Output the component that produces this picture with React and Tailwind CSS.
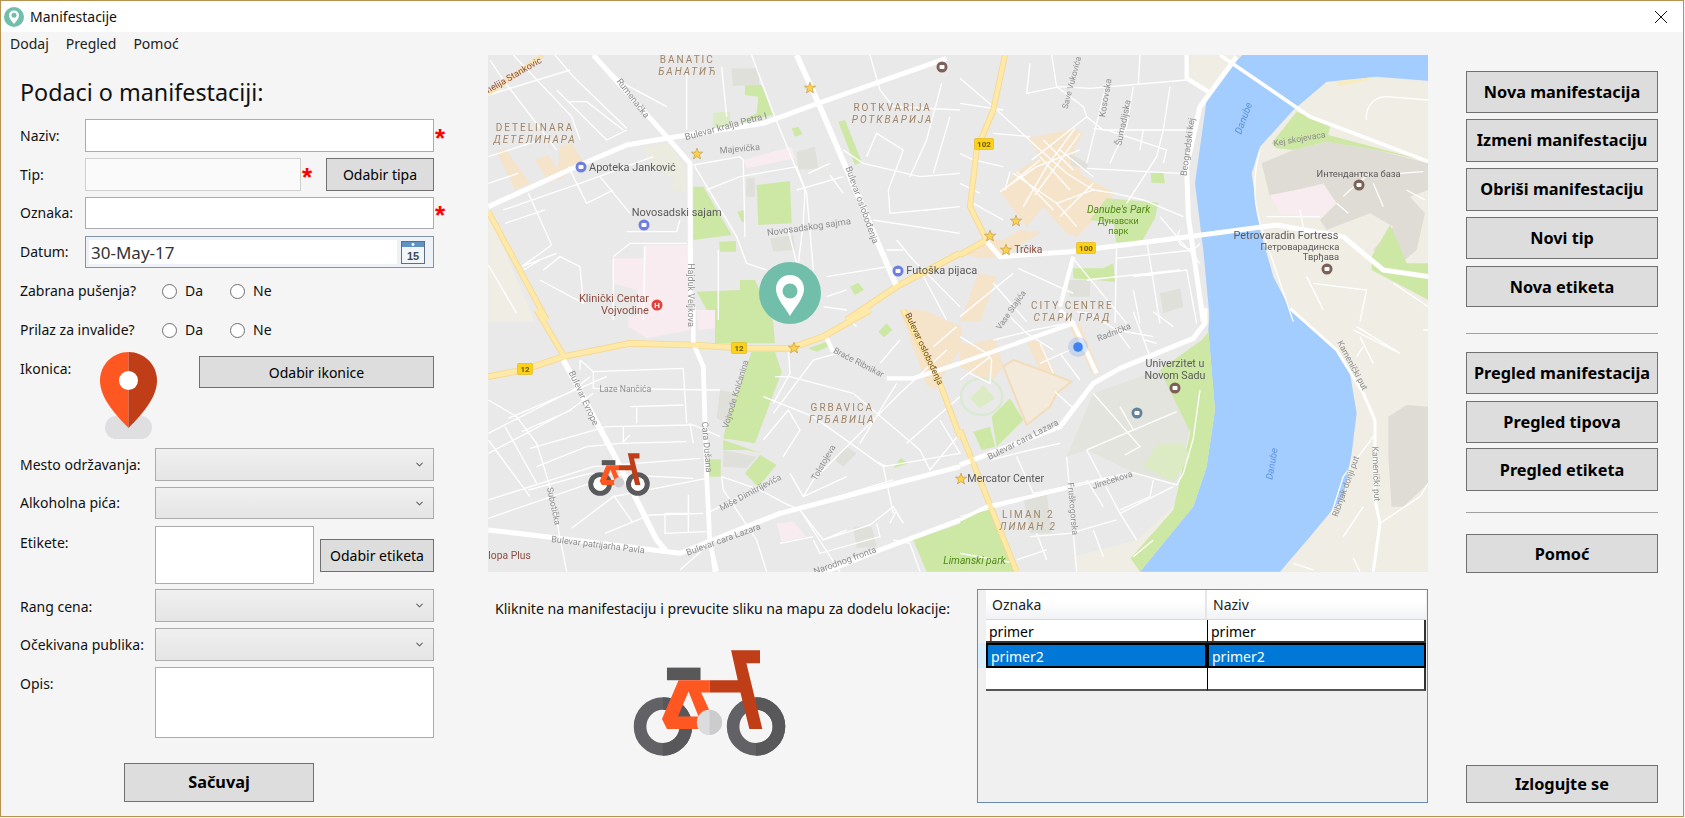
import React from 'react';
import { ChevronDown } from 'lucide-react';

const Q1 = 'translate(480 50) scale(.3333)';
const Q2 = 'translate(960 50) scale(.3333)';
const Q3 = 'translate(480 310) scale(.3333)';
const Q4 = 'translate(960 310) scale(.3333)';

const PARK = '#cde7a5';
const OLD = '#f5e3ca';
const PINK = '#f9ecf1';
const BLOCK = '#e0e0da';
const LAND = '#f0ede5';
const RIVER = '#a3ccff';
const YELLOW = '#fee9a8';

// areas are written in zoomed pixels of each map quarter
const AREAS = [
  [Q2, LAND, '695,15 830,15 760,100 740,125 680,85'],
  [Q2, LAND, '1000,180 1100,95 1250,80 1405,95 1405,815 1010,815 940,680 900,540 875,370 900,290'],
  [Q4, LAND, '990,-5 1405,-5 1405,785 960,785 1050,680 1150,560 1175,430 1190,310 1170,190 1130,120'],
  [Q4, LAND, '720,90 745,60 755,300 730,470 690,590 540,785 350,785 340,740 530,690 640,590 690,360'],
  [Q2, RIVER, '850,13 800,60 740,150 705,400 730,600 750,815 1010,815 940,680 900,540 875,370 900,290 1000,180 1100,95 1250,80 1405,92 1405,13'],
  [Q4, RIVER, '750,-5 745,60 765,300 740,470 700,590 540,785 960,785 1050,680 1150,560 1175,430 1190,310 1170,190 1130,120 990,-5'],
  [Q2, '#dfdbd5', '905,340 1000,300 1100,275 1250,300 1405,340 1405,420 1350,440 1395,490 1370,600 1310,650 1240,600 1300,530 1230,490 1100,540 1080,510 1130,460 1090,400 930,440'],
  [Q2, PINK, '930,435 1090,405 1130,460 1080,505 960,490'],
  [Q2, PARK, '935,280 1010,185 1110,230 1105,255 1405,335 1250,300 1100,275 1000,300 950,295'],
  [Q2, PARK, '1235,620 1290,525 1320,590 1340,640 1405,640 1405,750 1235,660'],
  [Q2, '#f9ecb8', '1130,95 1250,80 1200,95 1135,108'],
  [Q4, '#dfdbd5', '1285,320 1340,285 1405,290 1405,520 1330,590 1295,590 1285,430'],
  [Q4, '#e4e4de', '320,440 400,250 600,180 690,360 650,520 525,490 380,420'],
  [Q4, PARK, '600,180 725,90 745,65 720,250 690,365'],
  [Q4, PARK, '745,60 765,300 740,470 700,590 540,785 512,745 640,600 690,370'],
  [Q4, '#dcebc4', '550,470 590,405 670,400 690,440 640,515'],
  [Q1, OLD, '50,305 75,295 150,400 105,420'],
  [Q1, OLD, '165,330 205,315 240,370 210,400'],
  [Q1, OLD, '240,290 275,280 310,335 230,395'],
  [Q1, '#ecebe0', '485,290 565,280 615,350 615,425 570,420 580,385 520,350'],
  [Q1, PINK, '400,625 490,625 490,585 625,585 625,815 470,815 470,720 400,700'],
  [Q1, PINK, '790,330 935,290 945,325 800,355'],
  [Q1, PARK, '640,410 670,410 755,555 640,570'],
  [Q1, PARK, '830,405 930,393 935,520 835,525'],
  [Q1, PARK, '795,105 845,105 880,195 780,215 830,190 835,140 795,135'],
  [Q1, '#dcebc4', '700,188 750,185 752,230 700,235'],
  [Q1, PARK, '1075,215 1095,210 1145,335 1125,345'],
  [Q1, PARK, '935,235 955,230 968,252 945,260'],
  [Q1, PARK, '772,485 792,480 798,515 785,515'],
  [Q1, PARK, '718,575 768,573 768,605 720,605'],
  [Q1, PARK, '1110,710 1135,698 1152,720 1125,735'],
  [Q1, PARK, '650,725 780,720 780,690 825,690 880,815 700,815'],
  [Q1, BLOCK, '755,55 835,55 838,105 758,108'],
  [Q1, BLOCK, '950,305 1005,290 1015,355 955,360'],
  [Q1, BLOCK, '800,385 825,385 825,440 798,440'],
  [Q1, BLOCK, '870,565 940,555 945,600 880,605'],
  [Q1, LAND, '25,490 25,815 165,815'],
  [Q2, OLD, '205,265 345,235 370,250 340,300 365,375 465,430 400,510 350,560 320,550 250,470 200,530 120,425 170,365 240,320'],
  [Q2, OLD, '0,610 75,570 130,570 180,540 245,545 130,620 60,625'],
  [Q2, OLD, '55,670 110,680 60,815 0,815'],
  [Q2, PARK, '440,445 595,458 585,505 548,570 468,578 462,520 390,510'],
  [Q2, PARK, '572,370 610,365 615,400 575,398'],
  [Q2, PARK, '340,655 430,655 460,640 465,695 340,685'],
  [Q2, BLOCK, '320,690 390,690 390,740 330,740'],
  [Q2, BLOCK, '600,730 660,715 670,770 610,790'],
  [Q2, BLOCK, '325,310 385,340 380,360 335,345'],
  [Q3, PARK, '815,125 885,125 905,185 825,400 730,385 740,340'],
  [Q3, PARK, '705,0 850,0 880,40 885,100 705,100'],
  [Q3, PARK, '730,390 845,430 800,420 730,420'],
  [Q3, PARK, '840,435 890,465 835,530 795,490'],
  [Q3, PARK, '685,448 722,448 722,500 685,500'],
  [Q3, PARK, '1195,65 1220,40 1237,60 1212,82'],
  [Q3, PARK, '1240,475 1262,445 1285,460'],
  [Q3, PARK, '985,115 1040,95 1045,110 1010,125'],
  [Q3, PARK, '1300,690 1445,640 1445,785 1340,785'],
  [Q3, PINK, '445,20 630,0 630,60 500,85 445,50'],
  [Q3, PINK, '650,0 705,0 705,55 655,60'],
  [Q3, PINK, '890,640 940,635 978,680 905,695'],
  [Q3, BLOCK, '720,240 770,250 740,340 710,325'],
  [Q3, BLOCK, '730,420 830,440 800,475 730,470'],
  [Q3, BLOCK, '1120,650 1175,650 1190,710 1130,715'],
  [Q3, BLOCK, '1100,410 1130,430 1090,470 1065,450'],
  [Q3, OLD, '1260,0 1330,0 1445,50 1445,110 1365,240 1340,225 1300,115'],
  [Q4, OLD, '0,100 40,100 105,85 130,170 95,215 40,190 0,170'],
  [Q4, OLD, '200,95 240,90 290,200 250,200'],
  [Q4, OLD, '330,55 360,40 420,190 450,140 420,190 400,195'],
  [Q4, PARK, '0,620 90,590 165,785 0,785'],
  [Q4, PARK, '40,365 90,350 105,410 65,420'],
  [Q4, PARK, '95,320 150,265 190,330 110,410'],
  [Q4, '#dcebc4', '30,265 70,225 105,265 60,295'],
  [Q4, BLOCK, '190,560 260,550 275,670 210,670'],
];

const MINOR = [
  [Q1, 'M30 30 L70 90 L230 300 M100 15 L275 200 L300 270 M225 15 L280 80 L440 235 M380 55 L430 100 L560 170 M620 70 L620 240 M725 50 L740 200 M815 15 L880 190 L975 420 L970 520 L955 640 M1170 15 L1200 120 L1240 170 L1440 180 M25 135 L270 60 M25 320 L180 270 M25 400 L115 370 M230 120 L380 270 L440 240 M270 155 L320 155 L430 240 M70 480 L300 400 L520 320 M75 520 L195 480 M145 430 L215 585 M265 350 L320 460 L400 420 M360 380 L450 490 M440 545 L590 545 L600 510 M230 610 L125 650 L215 585 M640 345 L780 320 L790 330 L795 560 M680 420 L780 380 L950 350 L980 430 L1000 660 M1050 375 L1090 430 M985 370 L1050 340 M645 350 L770 560 L800 640 L860 660 M925 540 L950 640 M950 420 L1090 380 M1090 300 L1150 340 L1320 380 L1440 370 M1160 320 L1190 250 L1270 300 L1225 420 L1230 490 L1340 480 L1440 470 M1220 600 L1270 600 M1180 510 L1440 550 M1290 380 L1340 270 L1385 100 M1360 370 L1410 200 M1040 680 L1225 650 M1040 740 L1100 720 M1030 770 L1100 780 M1250 570 L1300 630 L1440 770 M190 660 L240 620 L300 650 L310 760 L180 690 M400 620 L450 580 L620 580 M130 660 L180 630 M495 590 L490 810 M400 625 L400 810 M715 600 L715 810 M1320 660 L1400 810 M25 645 L110 790'],
  [Q2, 'M0 85 L100 170 L230 290 L320 370 L400 420 L465 430 L550 450 L670 500 M210 40 L200 130 L300 110 L390 115 L680 90 M275 15 L290 110 L370 170 L380 200 L280 280 L215 330 M380 200 L430 240 L680 240 M540 15 L535 105 M630 110 L610 240 L590 320 L500 460 M520 110 L500 230 L450 340 M440 100 L380 340 M380 355 L660 370 M400 235 L440 240 L620 300 L610 340 M550 240 L540 300 M225 435 L360 250 M130 420 L240 330 M150 365 L135 420 M160 370 L290 460 L350 530 M290 460 L400 420 M0 310 L40 330 L130 350 M0 400 L60 430 M100 250 L210 260 M130 180 L0 160 M40 460 L130 510 M470 578 L465 820 M560 570 L600 820 M600 500 L720 640 M335 620 L500 820 M380 690 L660 660 M470 625 L700 600 M520 680 L680 660 L710 820 M520 720 L540 820 M175 655 L340 730 M0 800 L160 670 M100 700 L200 815 M660 540 A35 35 0 1 0 720 580 M900 300 A400 400 0 0 0 900 520 L1000 815 M1220 210 A60 60 0 0 1 1280 140 L1405 150 M1270 470 L1240 400 M1150 440 L1170 420 L1230 370 M1320 370 L1390 365 M1340 420 L1395 450 M1130 460 L1165 490 M920 500 L1080 500 M1020 480 L1030 530 M1300 700 L1405 770 M1060 700 L1220 720 L1200 815 M1040 680 L1090 780 M240 320 L330 420 M170 365 L280 480 M345 235 L260 350 L190 470 M300 300 L400 380 M250 270 L340 360 M120 425 L230 350 L360 300 M300 500 L400 400'],
  [Q3, 'M25 270 L110 320 L170 400 L210 530 L260 785 M25 370 L280 240 L330 200 M85 325 L380 200 M25 430 L270 300 L340 250 M125 365 L275 300 M150 415 L380 350 L640 345 L720 380 M170 470 L320 410 L420 400 L620 395 M25 570 L340 470 L660 445 M25 390 L150 560 M75 350 L170 520 M275 655 L400 560 L680 505 M145 540 L330 490 L640 505 M25 625 L330 520 M300 150 L340 185 L610 175 L620 340 M300 150 L300 180 M340 185 L340 235 L720 240 M450 290 L610 285 M470 290 L470 340 M630 340 L640 400 M430 350 L430 395 L450 375 M555 610 L630 610 M555 610 L555 670 L680 665 M625 555 L625 665 M375 670 L510 615 L670 610 M700 790 L690 700 L600 780 M400 555 L460 640 M725 500 L730 540 L830 690 L860 785 M725 500 L840 540 L915 580 L960 600 L1080 785 M680 610 L900 500 M930 490 L970 560 L1100 500 M970 560 L1000 510 L1120 390 L1260 250 L1400 120 M885 200 L930 200 L1120 250 L1320 420 M850 260 L1000 320 L1210 470 L1240 610 M850 390 L925 300 L960 360 L910 440 M880 310 L1000 150 L1070 130 M925 120 L930 190 L880 280 M1140 400 L1250 220 M1280 400 L1440 260 M1440 370 L1350 480 L1320 420 M1210 470 L1440 430 L1380 330 M1040 570 L1240 510 M960 600 L1030 690 L1100 660 M1030 690 L1170 645 L1240 590 L1270 640 M1000 690 L1020 730 L1200 680 L1190 640 M900 700 L1000 680 M1240 690 L1290 700 L1320 785 M1230 640 L1250 600 M1180 450 L1220 470 M1430 50 L1360 110 M1100 20 L1130 50 M1260 90 L1200 160'],
  [Q4, 'M0 80 L80 130 L95 150 L90 220 L30 190 M0 210 L90 140 M100 90 L220 60 L320 40 M150 20 L200 70 L280 120 M350 5 L390 10 L470 60 L580 80 M580 5 L640 50 M470 60 L510 115 M555 90 L590 100 M520 5 L570 140 M240 160 L330 120 M300 130 L360 210 M240 100 L280 190 M285 245 L340 295 M400 250 L540 410 L495 435 M480 290 L520 360 M380 420 L650 305 M380 420 L480 610 L640 530 M320 440 L350 785 M0 620 L320 535 L520 488 L650 525 L670 490 L700 385 L720 240 M90 450 L210 420 M170 440 L220 550 L500 490 M210 420 L300 400 M480 610 L530 690 M380 510 L430 590 M580 510 L570 560 L480 600 M210 680 L330 670 L470 630 M400 660 L430 740 M170 750 L260 720 M230 670 L260 750 M0 730 L170 760 M1180 60 L1320 130 M1240 160 L1200 80 M1320 130 L1190 50 M1390 60 L1405 60 M1240 380 L1150 500 L1115 610 M1150 680 L1210 590 M1260 640 L1380 560 L1405 520 M1000 760 L1060 780 M1180 745 L1200 785 M520 740 L580 690 M1210 110 L1190 140'],
];

const MAJOR = [
  [Q1, 'M25 470 L300 345 L440 285 L560 265 L850 220 L1000 165 L1400 25', 15, '#fff'],
  [Q1, 'M340 15 L560 260 L630 340 L632 810', 15, '#fff'],
  [Q3, 'M640 -10 L640 100 L670 170 L680 500 L690 700 L710 785', 14, '#fff'],
  [Q1, 'M950 15 L1020 170 L1250 710', 17, '#fff'],
  [Q3, 'M250 150 L400 430 L530 690 L560 725', 17, '#fff'],
  [Q3, 'M25 660 L200 680 L520 720 L600 730 L900 610 L1440 470', 15, '#fff'],
  [Q4, 'M0 465 L300 350 L400 220 L480 175 L700 85 L735 40 L735 -5', 15, '#fff'],
  [Q2, 'M730 815 L685 500 L680 350 L720 170 L830 20', 15, '#fff'],
  [Q2, 'M680 15 L680 85 L745 125', 13, '#fff'],
  [Q3, 'M1000 800 L1200 720 L1440 630', 14, '#fff'],
  [Q4, 'M0 630 L80 590 L320 535', 11, '#fff'],
  [Q2, 'M780 15 L1050 200 L1130 230 L1405 335', 11, '#fff'],
  [Q4, 'M990 -5 L1130 120 L1210 250 L1245 330 L1245 570 L1260 640 L1240 785', 9, '#fff'],
  [Q2, 'M80 575 L120 620 L330 605 L650 565 L950 525 L1150 560 L1270 660 L1405 680', 15, '#fff'],
  [Q2, 'M340 620 L300 770', 13, '#fff'],
  [Q4, 'M300 0 L340 40', 13, '#fff'],
  [Q3, 'M1040 85 L1060 125 M1220 205 L1300 205 L1440 160', 13, '#fff'],
  [Q4, 'M0 160 L340 40 L410 190', 13, '#fff'],
  [Q1, 'M25 130 L190 15', 14, '#f9e3b5'],
  [Q1, 'M25 485 L200 810', 13, YELLOW],
  [Q3, 'M170 0 L250 135', 13, YELLOW],
  [Q3, 'M25 200 L130 180 L250 140 L450 100 L640 105 L800 115 L930 115 L1030 80 L1170 0', 15, YELLOW],
  [Q1, 'M1100 810 L1250 710 L1440 610', 15, YELLOW],
  [Q2, 'M0 615 L80 570', 14, YELLOW],
  [Q2, 'M80 570 L30 470 L50 300 L100 180 L135 15', 13, YELLOW],
  [Q3, 'M1270 0 L1380 220 L1440 380', 13, YELLOW],
  [Q4, 'M0 360 L170 785', 13, YELLOW],
];

const GREY = '#8e8e8e';
const DARK = '#5a5a5a';
const BROWN = '#a08467';
const RED = '#8c4d40';
const GREEN = '#4f8a14';
const BLUE = '#5b93de';

const LABELS = [
  [Q1, 25, 130, -30, 27, RED, 'nelija Stankovic', 'start'],
  [Q1, 622, 39, 0, 30, BROWN, 'BANATIĆ', 'middle', 6],
  [Q1, 624, 75, 0, 30, BROWN, 'БАНАТИЋ', 'middle', 6, 'italic'],
  [Q1, 165, 243, 0, 30, BROWN, 'DETELINARA', 'middle', 6],
  [Q1, 165, 279, 0, 30, BROWN, 'ДЕТЕЛИНАРА', 'middle', 6, 'italic'],
  [Q1, 1238, 184, 0, 30, BROWN, 'ROTKVARIJA', 'middle', 6],
  [Q1, 1238, 219, 0, 30, BROWN, 'РОТКВАРИЈА', 'middle', 6, 'italic'],
  [Q1, 452, 150, 52, 27, GREY, 'Rumenačka'],
  [Q1, 740, 238, -15, 28, GREY, 'Bulevar kralja Petra I'],
  [Q1, 780, 305, -5, 27, GREY, 'Majevička'],
  [Q1, 327, 362, 0, 33, DARK, 'Apoteka Janković', 'start'],
  [Q1, 590, 498, 0, 33, DARK, 'Novosadski sajam'],
  [Q1, 988, 540, -8, 28, GREY, 'Novosadskog sajma'],
  [Q1, 1138, 468, 70, 27, GREY, 'Bulevar oslobođenja'],
  [Q1, 623, 735, 90, 27, GREY, 'Hajduk Veljkova'],
  [Q1, 402, 757, 0, 33, RED, 'Klinički Centar'],
  [Q1, 435, 792, 0, 33, RED, 'Vojvodine'],
  [Q1, 1279, 673, 0, 33, DARK, 'Futoška pijaca', 'start'],
  [Q2, 343, 100, -75, 25, GREY, 'Save Vukovića'],
  [Q2, 445, 145, -80, 27, GREY, 'Kosovska'],
  [Q2, 498, 220, -78, 27, GREY, 'Šumadijska'],
  [Q2, 692, 292, -82, 27, GREY, 'Beogradski kej'],
  [Q2, 860, 208, -70, 30, BLUE, 'Danube', 'middle', 0, 'italic'],
  [Q2, 1020, 275, -10, 26, GREY, 'Kej skojevaca'],
  [Q2, 1196, 381, 0, 28, DARK, 'Интендантска база'],
  [Q2, 476, 488, 0, 31, GREEN, "Danube's Park", 'middle', 0, 'italic'],
  [Q2, 475, 521, 0, 27, GREEN, 'Дунавски'],
  [Q2, 475, 552, 0, 27, GREEN, 'парк'],
  [Q2, 978, 568, 0, 33, DARK, 'Petrovaradin Fortress'],
  [Q2, 1020, 600, 0, 28, DARK, 'Петроварадинска'],
  [Q2, 1083, 631, 0, 28, DARK, 'Тврђава'],
  [Q2, 205, 608, 0, 31, RED, 'Trčika'],
  [Q2, 337, 778, 0, 30, BROWN, 'CITY CENTRE', 'middle', 6],
  [Q4, 337, 33, 0, 30, BROWN, 'СТАРИ ГРАД', 'middle', 6, 'italic'],
  [Q2, 160, 785, -55, 25, GREY, 'Vase Stajića'],
  [Q3, 303, 268, 65, 27, GREY, 'Bulevar Evrope'],
  [Q3, 436, 246, 0, 26, GREY, 'Laze Nančića'],
  [Q3, 775, 255, -73, 26, GREY, 'Vojvode Knićanina'],
  [Q3, 1132, 165, 27, 26, GREY, 'Braće Ribnikar'],
  [Q3, 672, 412, 85, 27, GREY, 'Cara Dušana'],
  [Q3, 1087, 303, 0, 30, BROWN, 'GRBAVICA', 'middle', 6],
  [Q3, 1087, 338, 0, 30, BROWN, 'ГРБАВИЦА', 'middle', 6, 'italic'],
  [Q3, 1038, 462, -60, 26, GREY, 'Tolstojeva'],
  [Q3, 815, 555, -28, 26, GREY, 'Miše Dimitrijevića'],
  [Q3, 213, 590, 78, 26, GREY, 'Subotička'],
  [Q3, 353, 713, 7, 27, GREY, 'Bulevar patrijarha Pavla'],
  [Q3, 733, 697, -20, 27, GREY, 'Bulevar cara Lazara'],
  [Q3, 1098, 760, -20, 27, GREY, 'Narodnog fronta'],
  [Q3, 25, 746, 0, 31, RED, 'lopa Plus', 'start'],
  [Q3, 1390, 762, 0, 31, GREEN, 'Limanski park', 'start', 0, 'italic'],
  [Q3, 1325, 120, 65, 26, '#6a4a2a', 'Bulevar oslobođenja'],
  [Q4, 465, 75, -22, 26, GREY, 'Radnička'],
  [Q4, 645, 172, 0, 32, DARK, 'Univerzitet u'],
  [Q4, 645, 207, 0, 32, DARK, 'Novom Sadu'],
  [Q4, 193, 397, -27, 27, GREY, 'Bulevar cara Lazara'],
  [Q4, 22, 517, 0, 32, DARK, 'Mercator Center', 'start'],
  [Q4, 460, 518, -18, 26, GREY, 'Jirečekova'],
  [Q4, 330, 597, 85, 26, GREY, 'Fruškogorska'],
  [Q4, 205, 625, 0, 30, BROWN, 'LIMAN 2', 'middle', 6],
  [Q4, 205, 660, 0, 30, BROWN, 'ЛИМАН 2', 'middle', 6, 'italic'],
  [Q4, 1170, 170, 62, 26, GREY, 'Kamenički put'],
  [Q4, 1240, 492, 88, 26, GREY, 'Kamenički put'],
  [Q4, 1165, 532, -70, 26, GREY, 'Ribnjak donji put'],
  [Q4, 945, 463, -80, 29, BLUE, 'Danube', 'middle', 0, 'italic'],
];

const STARS = [[810, 88], [697, 154], [1016, 221], [990, 236], [1006, 250], [794, 348], [961, 479]];
const SHIELDS = [[984, 144, '102'], [1086, 248, '100'], [739, 348, '12'], [525, 369, '12']];
const POIS = [
  [942, 67, '#7c6158', 5.5], [1359, 185, '#7c6158', 5.5], [1327, 269, '#7c6158', 5.5],
  [1175, 388, '#7c6158', 5.5], [1137, 413, '#64829a', 5.5],
  [581, 167, '#6f7fe0', 5.5], [644, 225, '#6f7fe0', 5.5], [898, 271, '#6f7fe0', 5.5],
];

function Star({ x, y }) {
  const pts = '0,-5.8 1.5,-1.8 5.6,-1.8 2.4,0.8 3.5,4.9 0,2.5 -3.5,4.9 -2.4,0.8 -5.6,-1.8 -1.5,-1.8';
  return <polygon points={pts} transform={`translate(${x} ${y})`} fill="#fbd34a" stroke="#c79a4a" strokeWidth="0.7" />;
}

function Bike({ className }) {
  return (
    <svg viewBox="70 32 460 322" className={className}>
      <circle cx="160" cy="262" r="69" fill="none" stroke="#626266" strokeWidth="38" />
      <path d="M160 174 A88 88 0 0 1 160 350 V312 A50 50 0 0 0 160 212 Z" fill="#58585a" />
      <circle cx="440" cy="262" r="69" fill="none" stroke="#626266" strokeWidth="38" />
      <path d="M440 174 A88 88 0 0 1 440 350 V312 A50 50 0 0 0 440 212 Z" fill="#58585a" />
      <rect x="172" y="85" width="101" height="38" fill="#58585a" />
      <path d="M207 123 H300 V160 H275 L305 225 L270 240 L237 157 L205 232 H270 V270 H172 L157 240 Z" fill="#ff5722" />
      <path d="M300 123 H385 L365 33 H452 V72 H411 L459 270 H420 L393 160 H300 Z" fill="#bf3d17" />
      <circle cx="300" cy="250" r="38" fill="#cccccc" />
      <path d="M300 212 A38 38 0 0 0 300 288 Z" fill="#dcdcde" />
    </svg>
  );
}

function MapView() {
  return (
    <svg viewBox="488 55 940 517" className="w-[940px] h-[517px] block blur-[0.3px] bg-[#e9e9e9]">
      {AREAS.map(([t, fill, pts], i) => <polygon key={i} transform={t} points={pts} fill={fill} />)}
      <polygon transform={Q4} points="130,170 160,150 230,175 335,215 290,250 270,290 200,345 170,270" fill="#f3eadb" stroke="#f2dcb9" strokeWidth="6" />
      <ellipse transform={Q4} cx="65" cy="260" rx="62" ry="55" fill="none" stroke="#d9ead0" strokeWidth="7" />
      {MINOR.map(([t, d], i) => <path key={i} transform={t} d={d} fill="none" stroke="#fff" strokeWidth="4" />)}
      {MAJOR.filter((r) => r[3] === YELLOW).map(([t, d, w], i) => (
        <path key={i} transform={t} d={d} fill="none" stroke="#f6d88c" strokeWidth={w + 5} strokeLinejoin="round" />
      ))}
      {MAJOR.map(([t, d, w, c], i) => <path key={i} transform={t} d={d} fill="none" stroke={c} strokeWidth={w} strokeLinejoin="round" />)}
      {POIS.map(([x, y, c, r], i) => (
        <g key={i}>
          <circle cx={x} cy={y} r={r} fill={c} />
          <rect x={x - 2.5} y={y - 2} width="5" height="4" rx="1" fill="#fff" />
        </g>
      ))}
      <circle cx="657" cy="305" r="5.5" fill="#e3403a" />
      <text x="657" y="308" fontSize="8" fontWeight="700" fill="#fff" textAnchor="middle" className="font-['Roboto']">H</text>
      {STARS.map(([x, y], i) => <Star key={i} x={x} y={y} />)}
      {SHIELDS.map(([x, y, t], i) => (
        <g key={i}>
          <rect x={x - (t.length > 2 ? 9.5 : 7.5)} y={y - 5.5} width={t.length > 2 ? 19 : 15} height="11" rx="1" fill="#fcd116" stroke="#e0b21a" strokeWidth="0.6" />
          <text x={x} y={y + 3} fontSize="8" fontWeight="700" fill="#6a5a10" textAnchor="middle" className="font-['Roboto']">{t}</text>
        </g>
      ))}
      {LABELS.map(([t, x, y, rot, size, fill, text, anchor = 'middle', ls = 0, fontStyle = 'normal'], i) => (
        <text
          key={i}
          transform={`${t} rotate(${rot} ${x} ${y})`}
          x={x}
          y={y}
          fontSize={size}
          fill={fill}
          textAnchor={anchor}
          letterSpacing={ls}
          fontStyle={fontStyle}
          className="font-['Roboto']"
        >
          {text}
        </text>
      ))}
      <circle cx="1078" cy="347" r="10" fill="#4285f4" opacity="0.2" />
      <circle cx="1078" cy="347" r="4.8" fill="#3f83f3" />
      <circle cx="790" cy="293" r="31" fill="#71bfaa" />
      <path d="M790 275 C798 275 804 281 804 289 C804 298 796 306 790 316 C784 306 776 298 776 289 C776 281 782 275 790 275Z" fill="#fff" />
      <circle cx="790" cy="291" r="7.5" fill="#71bfaa" />
      <g transform="translate(588 453) scale(.1348)">
        <g transform="translate(-70 -32)">
          <circle cx="160" cy="262" r="69" fill="none" stroke="#5a5a5d" strokeWidth="38" />
          <circle cx="160" cy="262" r="50" fill="#fff" />
          <circle cx="440" cy="262" r="69" fill="none" stroke="#5a5a5d" strokeWidth="38" />
          <circle cx="440" cy="262" r="50" fill="#fff" />
          <rect x="172" y="85" width="101" height="38" fill="#58585a" />
          <path d="M207 123 H300 V160 H275 L305 225 L270 240 L237 157 L205 232 H270 V270 H172 L157 240 Z" fill="#ff5722" />
          <path d="M300 123 H385 L365 33 H452 V72 H411 L459 270 H420 L393 160 H300 Z" fill="#bf3d17" />
          <circle cx="300" cy="250" r="38" fill="#cfcfd1" />
        </g>
      </g>
    </svg>
  );
}

function Btn({ className = '', children }) {
  return (
    <button type="button" className={`block border border-[#707070] bg-[#dddddd] text-black ${className}`}>
      {children}
    </button>
  );
}

function SideBtn({ className = '', children }) {
  return <Btn className={`w-[192px] shrink-0 text-[16.3px] font-bold ${className}`}>{children}</Btn>;
}

function Label({ className = '', children }) {
  return <span className={`text-[14px] leading-none text-[#111] ${className}`}>{children}</span>;
}

function Star2() {
  return <span className="w-[12px] h-[24px] pt-px text-center text-[26px] leading-none font-bold text-[#ff0000] font-['Liberation_Sans']">*</span>;
}

function Field({ label, tall }) {
  return (
    <div className={`flex items-center ${tall}`}>
      <Label className="w-[65px] shrink-0">{label}</Label>
      <input className="w-[349px] h-full border border-[#a9adb3] bg-white outline-none" />
      <Star2 />
    </div>
  );
}

function Radios({ label, className }) {
  return (
    <div className={`flex items-center h-[24px] ${className}`}>
      <Label className="w-[142px] shrink-0">{label}</Label>
      <input type="radio" name={label} className="appearance-none w-[15px] h-[15px] rounded-full border border-[#6f6f6f] bg-white" />
      <Label className="ml-[8px] w-[45px]">Da</Label>
      <input type="radio" name={label} className="appearance-none w-[15px] h-[15px] rounded-full border border-[#6f6f6f] bg-white" />
      <Label className="ml-[8px]">Ne</Label>
    </div>
  );
}

function Combo({ label, className, labelClass = '' }) {
  return (
    <div className={`flex items-center ${className}`}>
      <Label className={`w-[135px] shrink-0 ${labelClass}`}>{label}</Label>
      <div className="w-[279px] h-full flex items-center justify-end pr-[8px] border border-[#acacac] bg-gradient-to-b from-[#f0f0f0] to-[#e5e5e5]">
        <ChevronDown size={11} strokeWidth={2.2} className="text-[#606060]" />
      </div>
    </div>
  );
}

function DataRow({ a, b, kind }) {
  const heights = { first: 'h-[23px] pt-[2px]', selected: 'h-[25px] pt-[1px]', last: 'h-[23px]' };
  const tones = {
    first: 'bg-white text-black border-b-2 border-[#333]',
    selected: 'bg-[#0078d7] text-white border-2 border-black',
    last: 'bg-white text-black border-b-2 border-[#555]',
  };
  const base = `flex items-center pl-[3px] text-[14px] ${heights[kind]} ${tones[kind]}`;
  return (
    <div className="flex">
      <div className={`w-[8px] shrink-0 ${kind === 'selected' ? 'bg-[#dcefff]' : 'bg-[#f0f0f0]'}`} />
      <div className={`w-[221px] ${base}`}>{a}</div>
      <div className={`w-[219px] ${base} ${kind === 'selected' ? '' : 'border-l border-l-black border-r-2 border-r-[#333]'}`}>{b}</div>
    </div>
  );
}

export default function App() {
  return (
    <div className="w-[1685px] h-[818px] bg-[#f3f3f3] font-['Noto_Sans',sans-serif] overflow-hidden">
      <div className="w-[1684px] h-[817px] flex flex-col border border-[#b8924f] bg-[#f5f5f5]">
        <div className="h-[31px] shrink-0 flex items-center bg-white pl-[3px]">
          <svg viewBox="0 0 20 20" className="w-[20px] h-[20px]">
            <circle cx="10" cy="10" r="10" fill="#71bfaa" />
            <path d="M10 3.5 C13 3.5 15 5.7 15 8.4 C15 11.4 12.2 14 10 17 C7.8 14 5 11.4 5 8.4 C5 5.7 7 3.5 10 3.5Z" fill="#fff" />
            <circle cx="10" cy="8.2" r="2.5" fill="#71bfaa" />
          </svg>
          <span className="ml-[6px] text-[14px] text-[#111]">Manifestacije</span>
          <svg viewBox="0 0 14 14" className="w-[14px] h-[14px] ml-auto mr-[15px]">
            <path d="M1 1 L13 13 M13 1 L1 13" stroke="#111" strokeWidth="1" />
          </svg>
        </div>
        <div className="h-[22px] shrink-0 flex items-center pl-[9px] gap-[17px] text-[14px] text-[#222]">
          <span>Dodaj</span>
          <span>Pregled</span>
          <span>Pomoć</span>
        </div>

        <div className="flex-1 flex">
          <div className="w-[487px] shrink-0 pl-[19px] pt-[20px] flex flex-col">
            <h1 className="h-[36px] flex items-center text-[23.3px] text-[#111]">Podaci o manifestaciji:</h1>
            <Field label="Naziv:" tall="h-[33px] mt-[9px]" />
            <div className="flex items-center h-[33px] mt-[6px]">
              <Label className="w-[65px] shrink-0">Tip:</Label>
              <input className="w-[216px] h-full border border-[#d0d0d0] bg-[#fafafa] outline-none" />
              <Star2 />
              <Btn className="ml-[13px] w-[108px] h-full text-[14px]">Odabir tipa</Btn>
            </div>
            <Field label="Oznaka:" tall="h-[32px] mt-[6px]" />
            <div className="flex items-center h-[32px] mt-[7px]">
              <Label className="w-[65px] shrink-0">Datum:</Label>
              <div className="w-[349px] h-full flex items-center border border-[#8296ab] bg-[#eef1f5] p-[3px] pr-[8px]">
                <input readOnly value="30-May-17" className="flex-1 min-w-0 h-full pl-[2px] bg-white text-[17px] text-[#333] outline-none" />
                <svg viewBox="0 0 24 23" className="w-[24px] h-[23px] ml-[4px] shrink-0">
                  <rect x="0.5" y="0.5" width="23" height="22" fill="#f3f5f7" stroke="#5f6f7f" />
                  <rect x="1" y="1" width="22" height="5" fill="#5f93c4" />
                  <circle cx="12" cy="3.5" r="1.4" fill="#fff" />
                  <text x="12" y="19" fontSize="11" fontWeight="700" fill="#3c4a5a" textAnchor="middle" className="font-['Liberation_Sans']">15</text>
                </svg>
              </div>
            </div>
            <Radios label="Zabrana pušenja?" className="mt-[11px]" />
            <Radios label="Prilaz za invalide?" className="mt-[15px]" />

            <div className="flex items-start h-[87px] mt-[10px]">
              <Label className="w-[80px] shrink-0 mt-[10px]">Ikonica:</Label>
              <svg viewBox="0 0 57 87" className="w-[57px] h-[87px] shrink-0">
                <rect x="5" y="64" width="47" height="23" rx="11.5" fill="#dfdfe1" />
                <path d="M28.5 0 C13 0 0 12.5 0 28.5 C0 46 15 62 28.5 76 Z" fill="#ff5722" />
                <path d="M28.5 0 C44 0 57 12.5 57 28.5 C57 46 42 62 28.5 76 Z" fill="#bf3d17" />
                <circle cx="28.5" cy="28.5" r="9.5" fill="#fff" />
              </svg>
              <Btn className="ml-[42px] mt-[4px] w-[235px] h-[32px] text-[14px]">Odabir ikonice</Btn>
            </div>

            <Combo label="Mesto održavanja:" className="h-[33px] mt-[9px]" />
            <Combo label="Alkoholna pića:" className="h-[32px] mt-[6px]" />
            <div className="flex h-[58px] mt-[7px]">
              <Label className="w-[135px] shrink-0 mt-[10px]">Etikete:</Label>
              <div className="w-[159px] h-full border border-[#acacac] bg-white" />
              <Btn className="ml-[6px] mt-[13px] w-[114px] h-[33px] text-[14px]">Odabir etiketa</Btn>
            </div>
            <Combo label="Rang cena:" labelClass="mt-[2px]" className="h-[33px] mt-[5px]" />
            <Combo label="Očekivana publika:" className="h-[33px] mt-[6px]" />
            <div className="flex h-[71px] mt-[6px]">
              <Label className="w-[135px] shrink-0 mt-[10px]">Opis:</Label>
              <textarea className="w-[279px] h-full border border-[#acacac] bg-white outline-none resize-none" />
            </div>
            <Btn className="ml-[104px] mt-[25px] w-[190px] h-[39px] text-[16.3px] font-bold">Sačuvaj</Btn>
          </div>

          <div className="w-[940px] shrink-0 pt-[1px] flex flex-col">
            <MapView />
            <div className="flex">
              <div className="w-[489px] shrink-0 pl-[7px] pt-[26px]">
                <p className="h-[22px] leading-[22px] text-[14.1px] text-[#111] whitespace-nowrap">Kliknite na manifestaciju i prevucite sliku na mapu za dodelu lokacije:</p>
                <Bike className="ml-[138px] mt-[30px] w-[153px] h-[107px]" />
              </div>
              <div className="w-[451px] h-[214px] mt-[17px] border border-[#688caf] bg-[#f0f0f0]">
                <div className="flex h-[30px] ml-[8px]">
                  <div className="w-[221px] flex items-center pl-[6px] text-[14px] text-[#222] bg-gradient-to-b from-white from-40% to-[#f1f2f4] border-r-2 border-[#e6e6e6] border-b border-b-[#d5d9de]">Oznaka</div>
                  <div className="w-[219px] flex items-center pl-[6px] text-[14px] text-[#222] bg-gradient-to-b from-white from-40% to-[#f1f2f4] border-b border-b-[#d5d9de]">Naziv</div>
                </div>
                <DataRow a="primer" b="primer" kind="first" />
                <DataRow a="primer2" b="primer2" kind="selected" />
                <DataRow a="" b="" kind="last" />
              </div>
            </div>
          </div>

          <div className="w-[192px] ml-[38px] shrink-0 pt-[17px] flex flex-col">
            <SideBtn className="h-[42px]">Nova manifestacija</SideBtn>
            <SideBtn className="h-[43px] mt-[6px]">Izmeni manifestaciju</SideBtn>
            <SideBtn className="h-[43px] mt-[6px]">Obriši manifestaciju</SideBtn>
            <SideBtn className="h-[42px] mt-[6px]">Novi tip</SideBtn>
            <SideBtn className="h-[41px] mt-[7px] pt-[2px]">Nova etiketa</SideBtn>
            <div className="h-px bg-[#a0a0a0] mt-[26px] shrink-0" />
            <SideBtn className="h-[42px] mt-[18px]">Pregled manifestacija</SideBtn>
            <SideBtn className="h-[42px] mt-[7px]">Pregled tipova</SideBtn>
            <SideBtn className="h-[43px] mt-[5px] pt-[2px]">Pregled etiketa</SideBtn>
            <div className="h-px bg-[#a0a0a0] mt-[21px] shrink-0" />
            <SideBtn className="h-[39px] mt-[21px] pt-[2px]">Pomoć</SideBtn>
            <SideBtn className="h-[38px] mt-[192px]">Izlogujte se</SideBtn>
          </div>
        </div>
      </div>
    </div>
  );
}
